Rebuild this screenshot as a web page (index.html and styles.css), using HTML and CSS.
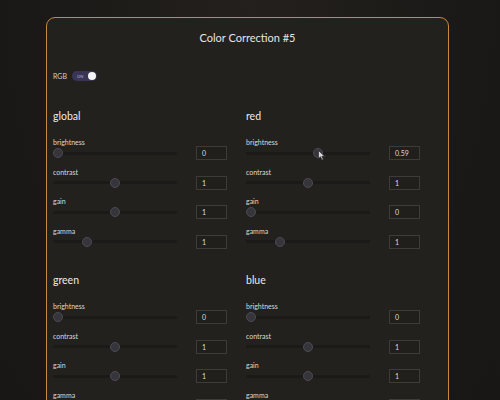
FILE: index.html
```html
<!DOCTYPE html>
<html>
<head>
<meta charset="utf-8">
<link rel="stylesheet" href="styles.css">
</head>
<body>
<div class="panel">
  <div class="title">Color Correction #5</div>
  <div class="toggle-row">
    <span class="toggle-label">RGB</span>
    <span class="toggle"><span class="toggle-on">ON</span><span class="knob"></span></span>
  </div>
  <div class="grid">
    <section class="group">
      <h3>global</h3>
      <div class="ctl"><div class="lbl">brightness</div><div class="row"><div class="track"><div class="rail"><span class="thumb" style="left:0%"></span></div></div><div class="num">0</div></div></div>
      <div class="ctl"><div class="lbl">contrast</div><div class="row"><div class="track"><div class="rail"><span class="thumb" style="left:50%"></span></div></div><div class="num">1</div></div></div>
      <div class="ctl"><div class="lbl">gain</div><div class="row"><div class="track"><div class="rail"><span class="thumb" style="left:50%"></span></div></div><div class="num">1</div></div></div>
      <div class="ctl"><div class="lbl">gamma</div><div class="row"><div class="track"><div class="rail"><span class="thumb" style="left:25%"></span></div></div><div class="num">1</div></div></div>
    </section>
    <section class="group">
      <h3>red</h3>
      <div class="ctl"><div class="lbl">brightness</div><div class="row"><div class="track"><div class="rail"><span class="thumb" style="left:59%"></span>
        <svg class="cursor" width="8" height="11" viewBox="0 0 8 11"><path d="M0.5 0.5 L0.5 8.5 L2.5 6.8 L4 10 L5.3 9.4 L3.9 6.3 L6.6 6.3 Z" fill="#d8d8d8" stroke="#333" stroke-width="0.8"/></svg>
      </div></div><div class="num">0.59</div></div></div>
      <div class="ctl"><div class="lbl">contrast</div><div class="row"><div class="track"><div class="rail"><span class="thumb" style="left:50%"></span></div></div><div class="num">1</div></div></div>
      <div class="ctl"><div class="lbl">gain</div><div class="row"><div class="track"><div class="rail"><span class="thumb" style="left:0%"></span></div></div><div class="num">0</div></div></div>
      <div class="ctl"><div class="lbl">gamma</div><div class="row"><div class="track"><div class="rail"><span class="thumb" style="left:25%"></span></div></div><div class="num">1</div></div></div>
    </section>
    <section class="group">
      <h3>green</h3>
      <div class="ctl"><div class="lbl">brightness</div><div class="row"><div class="track"><div class="rail"><span class="thumb" style="left:0%"></span></div></div><div class="num">0</div></div></div>
      <div class="ctl"><div class="lbl">contrast</div><div class="row"><div class="track"><div class="rail"><span class="thumb" style="left:50%"></span></div></div><div class="num">1</div></div></div>
      <div class="ctl"><div class="lbl">gain</div><div class="row"><div class="track"><div class="rail"><span class="thumb" style="left:50%"></span></div></div><div class="num">1</div></div></div>
      <div class="ctl"><div class="lbl">gamma</div><div class="row"><div class="track"><div class="rail"><span class="thumb" style="left:25%"></span></div></div><div class="num">1</div></div></div>
    </section>
    <section class="group">
      <h3>blue</h3>
      <div class="ctl"><div class="lbl">brightness</div><div class="row"><div class="track"><div class="rail"><span class="thumb" style="left:0%"></span></div></div><div class="num">0</div></div></div>
      <div class="ctl"><div class="lbl">contrast</div><div class="row"><div class="track"><div class="rail"><span class="thumb" style="left:50%"></span></div></div><div class="num">1</div></div></div>
      <div class="ctl"><div class="lbl">gain</div><div class="row"><div class="track"><div class="rail"><span class="thumb" style="left:50%"></span></div></div><div class="num">1</div></div></div>
      <div class="ctl"><div class="lbl">gamma</div><div class="row"><div class="track"><div class="rail"><span class="thumb" style="left:25%"></span></div></div><div class="num">1</div></div></div>
    </section>
  </div>
</div>
</body>
</html>
```
FILE: styles.css
```css
html, body {
  margin: 0;
  padding: 0;
  height: 100%;
  overflow: hidden;
}
body {
  background: radial-gradient(ellipse at 50% 0%, #23201d 0%, #1b1917 60%, #191715 100%);
  font-family: Lato, "Open Sans", sans-serif;
  color: #d8d6d2;
}
.panel {
  margin: 17px 0 0 46px;
  width: 403px;
  height: 420px;
  border: 1px solid #c68a3e;
  border-radius: 9px;
  background: #23211e;
  padding: 13px 0 0 6px;
  box-sizing: border-box;
}
.title {
  text-align: center;
  font-size: 11px;
  line-height: 14px;
  color: #e6e4e0;
  padding-right: 6px;
}
.toggle-row {
  margin-top: 26px;
  display: flex;
  align-items: center;
  height: 10px;
  gap: 5px;
}
.toggle-label {
  font-size: 7px;
  color: #d2d0cc;
}
.toggle {
  width: 25px;
  height: 10px;
  border-radius: 5px;
  background: #3a3556;
  display: flex;
  align-items: center;
  justify-content: space-between;
  padding: 0 1px 0 5px;
  box-sizing: border-box;
}
.toggle-on {
  font-size: 4px;
  color: #b9b4d6;
}
.knob {
  width: 8px;
  height: 8px;
  border-radius: 50%;
  background: #f4f4f6;
}
.grid {
  display: grid;
  grid-template-columns: 193px 193px;
  margin-top: 29px;
  row-gap: 18px;
}
.group h3 {
  margin: 0 0 16px 0;
  font-size: 10.5px;
  line-height: 12px;
  font-weight: 400;
  color: #eceae6;
}
.ctl {
  margin-bottom: 7.5px;
}
.lbl {
  font-size: 7px;
  line-height: 8px;
  color: #dcdad6;
}
.row {
  display: flex;
  align-items: center;
  height: 14px;
}
.track {
  width: 124px;
  height: 3px;
  background: #1c1a18;
  border-radius: 2px;
  margin-right: 19px;
}
.rail {
  position: relative;
  height: 100%;
  margin-right: 10px;
}
.thumb {
  position: absolute;
  top: -3.5px;
  width: 10px;
  height: 10px;
  border-radius: 50%;
  background: #36353b;
  border: 1px solid #4c4b55;
  box-sizing: border-box;
}
.cursor {
  position: absolute;
  left: 72px;
  top: -2px;
}
.num {
  width: 31px;
  height: 14px;
  box-sizing: border-box;
  border: 1px solid #3e3c3a;
  background: #211f1c;
  font-size: 7px;
  line-height: 12px;
  padding-left: 5px;
  color: #dddbd7;
}
```
